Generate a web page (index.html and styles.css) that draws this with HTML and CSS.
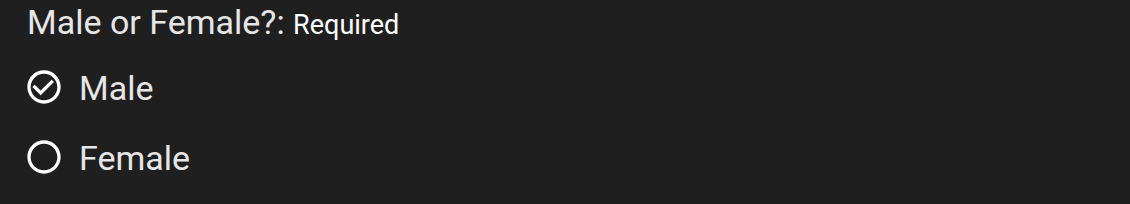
FILE: index.html
```html
<!DOCTYPE html>
<html>
<head>
    <title>Male or Female?</title>
    <link rel="stylesheet" href="styles.css">
</head>
<body>
    <div class="field">
        <div class="field-label">Male or Female?: <span class="required">Required</span></div>

        <div class="options">
            <div class="option selected">
                <svg class="radio" viewBox="0 0 24 24">
                    <path d="M16.59 7.58L10 14.17l-3.59-3.58L5 12l5 5 8-8zM12 2C6.48 2 2 6.48 2 12s4.48 10 10 10 10-4.48 10-10S17.52 2 12 2zm0 18c-4.42 0-8-3.58-8-8s3.58-8 8-8 8 3.58 8 8-3.58 8-8 8z"/>
                </svg>
                <span class="option-text">Male</span>
            </div>
            <div class="option">
                <svg class="radio" viewBox="0 0 24 24">
                    <path d="M12 2C6.48 2 2 6.48 2 12s4.48 10 10 10 10-4.48 10-10S17.52 2 12 2zm0 18c-4.42 0-8-3.58-8-8s3.58-8 8-8 8 3.58 8 8-3.58 8-8 8z"/>
                </svg>
                <span class="option-text">Female</span>
            </div>
        </div>
    </div>
</body>
</html>
```

FILE: styles.css
```css
* {
    margin: 0;
    padding: 0;
    box-sizing: border-box;
}

body {
    background: #1f1f1f;
    font-family: Roboto, 'Noto Sans', sans-serif;
    color: #e6e6e6;
}

.field {
    padding: 2px 24px 0;
}

.field-label {
    font-size: 34px;
    line-height: 40px;
    padding-left: 3px;
    color: #e6e6e6;
}

.required {
    font-size: 27px;
    line-height: 1;
    color: #fff;
}

.options {
    margin-top: 10px;
    display: flex;
    flex-direction: column;
}

.option {
    height: 70px;
    display: flex;
    align-items: center;
    gap: 15px;
}

.radio {
    width: 40px;
    height: 40px;
    fill: #fff;
    flex-shrink: 0;
}

.option-text {
    font-size: 34px;
    line-height: 40px;
    padding-top: 1px;
}
```
